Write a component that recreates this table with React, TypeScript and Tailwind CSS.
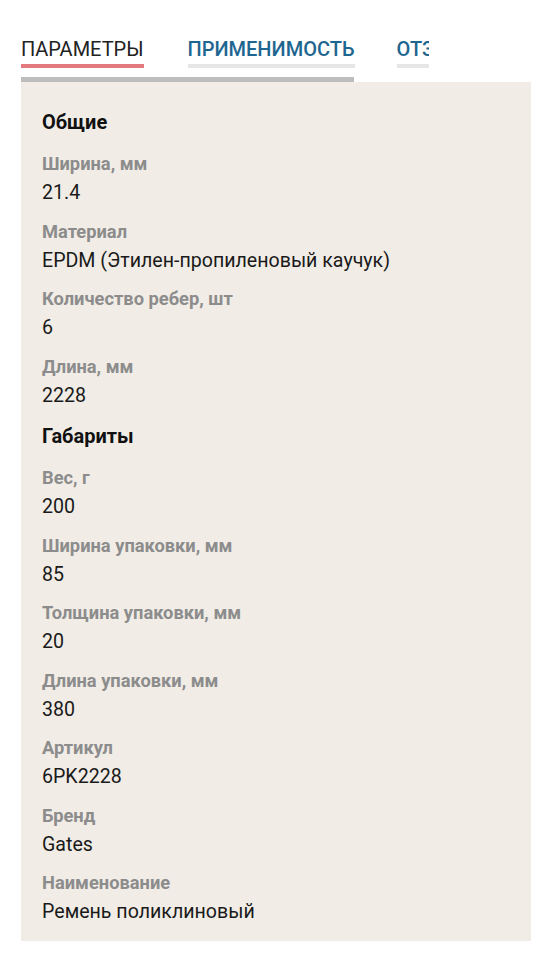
import React from "react";

type Item = { label: string; value: string };
type Section = { title: string; items: Item[] };

const sections: Section[] = [
  {
    title: "Общие",
    items: [
      { label: "Ширина, мм", value: "21.4" },
      { label: "Материал", value: "EPDM (Этилен-пропиленовый каучук)" },
      { label: "Количество ребер, шт", value: "6" },
      { label: "Длина, мм", value: "2228" },
    ],
  },
  {
    title: "Габариты",
    items: [
      { label: "Вес, г", value: "200" },
      { label: "Ширина упаковки, мм", value: "85" },
      { label: "Толщина упаковки, мм", value: "20" },
      { label: "Длина упаковки, мм", value: "380" },
      { label: "Артикул", value: "6PK2228" },
      { label: "Бренд", value: "Gates" },
      { label: "Наименование", value: "Ремень поликлиновый" },
    ],
  },
];

export default function App() {
  return (
    <div
      className="min-h-[960px] w-[552px] bg-white px-[21px]"
      style={{ fontFamily: "Roboto, 'Noto Sans', sans-serif" }}
    >
      <div className="w-[408px] overflow-hidden pt-[37px]">
        <div className="flex whitespace-nowrap">
          <div className="mr-[44px] shrink-0 border-b-4 border-[#e37a7f] pb-[3px] text-[20px] leading-[24px] text-[#222222]">
            ПАРАМЕТРЫ
          </div>
          <div className="mr-[42px] shrink-0 border-b-4 border-[#e6e6e6] pb-[3px] text-[20px] font-medium leading-[24px] text-[#1e6690]">
            ПРИМЕНИМОСТЬ
          </div>
          <div className="shrink-0 border-b-4 border-[#e6e6e6] pb-[3px] text-[20px] font-medium leading-[24px] text-[#1e6690]">
            ОТЗЫВЫ
          </div>
        </div>
      </div>
      <div className="mt-[9px] h-[5px] w-[333px] bg-[#bdbdbd]" />
      <div className="w-[510px] bg-[#f1ede6] px-[21px] pb-[17px] pt-[28px]">
        {sections.map((s, si) => (
          <div key={s.title} className={si > 0 ? "mt-[16.5px]" : ""}>
            <div className="text-[20px] font-bold leading-[24px] text-[#111111]">
              {s.title}
            </div>
            <div className="mt-[20px] flex flex-col gap-[16.5px]">
              {s.items.map((it) => (
                <div key={it.label} className="flex flex-col">
                  <div className="text-[18.3px] font-bold leading-[20px] text-[#8c8c8c]">
                    {it.label}
                  </div>
                  <div className="mt-[7px] text-[19.6px] leading-[24px] text-[#1a1a1a]">
                    {it.value}
                  </div>
                </div>
              ))}
            </div>
          </div>
        ))}
      </div>
    </div>
  );
}
